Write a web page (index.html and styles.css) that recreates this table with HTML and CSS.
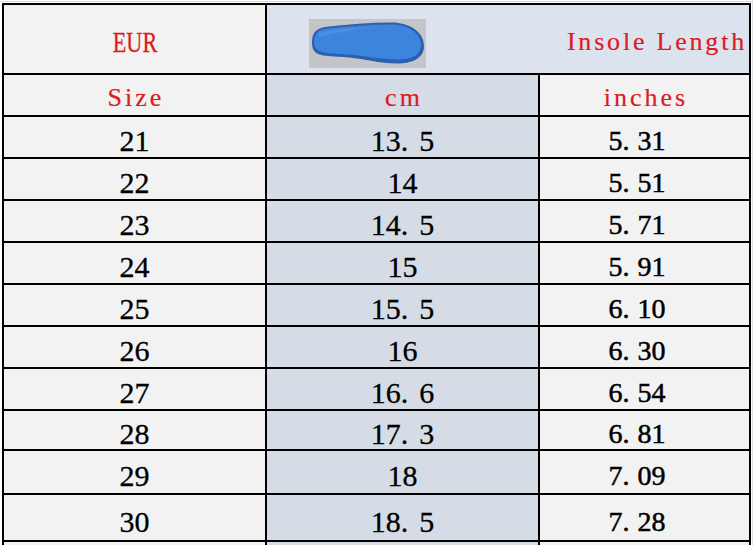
FILE: index.html
```html
<!DOCTYPE html>
<html lang="en">
<head>
<meta charset="utf-8">
<title>Insole Length Size Chart</title>
<link rel="stylesheet" href="styles.css">
</head>
<body>
<div class="page">
  <div class="topline"></div>
  <div class="sheet">
    <div class="cell c1 eur"><span class="eur-text">EUR</span></div>
    <div class="cell hd">
      <svg class="insole" width="117" height="49" viewBox="0 0 117 49" aria-hidden="true">
        <rect width="117" height="49" fill="#c4c5c7"/>
        <path d="M3,23 C3,12 9,8.5 20,7.5 C40,5.5 60,3.5 82,3.5 C101,3.5 115,13 115,27 C115,39 104,44.5 88,44.5 C70,44.5 56,40 40,38.5 C25,37 15,37.5 9,35 C4,32.5 3,28 3,23 Z" fill="#2c5fb2"/>
        <path d="M5,23 C5,14 10,10 20,9.5 C40,7.5 60,5.5 82,5.5 C99,5.5 112,14 112,26 C112,36 103,40.5 88,40.5 C70,40.5 56,36.5 40,35.5 C25,34.5 15,34.5 10,32 C6,29.5 5,26.5 5,23 Z" fill="#3d84dc"/>
        <path d="M10,14 C20,11 40,9 62,8 C45,11 26,13.5 10,18 Z" fill="#5b9be6" opacity="0.55"/>
      </svg>
      <span class="hd-text">Insole Length</span>
    </div>

    <div class="cell c1 sub">Size</div>
    <div class="cell c2 sub">cm</div>
    <div class="cell c3 sub">inches</div>

    <div class="cell c1 num">21</div>
    <div class="cell c2 num">13<span class="dot">.</span>5</div>
    <div class="cell c3 inch">5<span class="dot">.</span>31</div>

    <div class="cell c1 num">22</div>
    <div class="cell c2 num">14</div>
    <div class="cell c3 inch">5<span class="dot">.</span>51</div>

    <div class="cell c1 num">23</div>
    <div class="cell c2 num">14<span class="dot">.</span>5</div>
    <div class="cell c3 inch">5<span class="dot">.</span>71</div>

    <div class="cell c1 num">24</div>
    <div class="cell c2 num">15</div>
    <div class="cell c3 inch">5<span class="dot">.</span>91</div>

    <div class="cell c1 num">25</div>
    <div class="cell c2 num">15<span class="dot">.</span>5</div>
    <div class="cell c3 inch">6<span class="dot">.</span>10</div>

    <div class="cell c1 num">26</div>
    <div class="cell c2 num">16</div>
    <div class="cell c3 inch">6<span class="dot">.</span>30</div>

    <div class="cell c1 num">27</div>
    <div class="cell c2 num">16<span class="dot">.</span>6</div>
    <div class="cell c3 inch">6<span class="dot">.</span>54</div>

    <div class="cell c1 num">28</div>
    <div class="cell c2 num">17<span class="dot">.</span>3</div>
    <div class="cell c3 inch">6<span class="dot">.</span>81</div>

    <div class="cell c1 num">29</div>
    <div class="cell c2 num">18</div>
    <div class="cell c3 inch">7<span class="dot">.</span>09</div>

    <div class="cell c1 num">30</div>
    <div class="cell c2 num">18<span class="dot">.</span>5</div>
    <div class="cell c3 inch">7<span class="dot">.</span>28</div>

    <div class="cell c1"></div>
    <div class="cell c2"></div>
    <div class="cell c3"></div>
  </div>
</div>
</body>
</html>
```
FILE: styles.css
```css
html, body {
  margin: 0;
  padding: 0;
  height: 545px;
  overflow: hidden;
  background: #ffffff;
}

.page {
  width: 753px;
  height: 545px;
  border-right: 1px solid #dcdcdc;
  padding-top: 1px;
  box-sizing: border-box;
  overflow: hidden;
}

.topline {
  height: 1px;
  background: #d6d6d6;
}

.sheet {
  margin: 1px 0 0 2px;
  width: 749px;
  box-sizing: border-box;
  display: grid;
  grid-template-columns: 261px 271px 209px;
  grid-template-rows: 68px 40px repeat(7, 40px) 38px 42px 45px 40px;
  gap: 2px;
  padding: 2px;
  background: #000000;
  font-family: "Liberation Serif", "Times New Roman", serif;
  color: #000000;
}

.cell {
  display: flex;
  align-items: center;
  justify-content: center;
  box-sizing: border-box;
  line-height: 1;
}

.c1, .c3 {
  background: #f2f2f2;
}

.c2 {
  background: #d6dce5;
}

.eur {
  padding-top: 6px;
}

.eur-text {
  display: inline-block;
  color: #dd1a1e;
  font-size: 30px;
  transform: scaleX(0.74);
  -webkit-text-stroke: 0.3px #dd1a1e;
}

.hd {
  grid-column: 2 / span 2;
  background: #dce3ef;
  justify-content: space-between;
  align-items: stretch;
  padding: 0 2px 0 42px;
}

.insole {
  display: block;
  align-self: flex-end;
  margin-bottom: 5px;
}

.hd-text {
  align-self: center;
  padding-top: 6px;
  color: #dd1a1e;
  font-size: 26px;
  letter-spacing: 2.8px;
  -webkit-text-stroke: 0.2px #dd1a1e;
}

.sub {
  color: #dd1a1e;
  font-size: 26px;
  letter-spacing: 3px;
  padding-top: 6px;
  padding-left: 3px;
  -webkit-text-stroke: 0.2px #dd1a1e;
}

.num {
  font-size: 30px;
  padding-top: 8px;
  -webkit-text-stroke: 0.3px #000000;
}

.num .dot {
  padding-right: 11px;
}

.inch {
  font-size: 28px;
  padding-top: 8px;
  padding-right: 15px;
  -webkit-text-stroke: 0.5px #000000;
}

.inch .dot {
  padding-right: 8px;
}
```
